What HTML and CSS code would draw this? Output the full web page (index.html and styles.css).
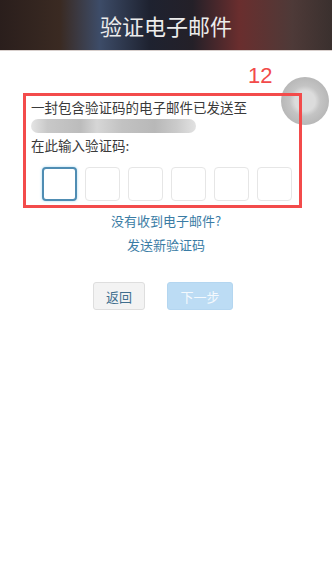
FILE: index.html
```html
<!DOCTYPE html>
<html lang="zh-CN">

<head>
    <meta charset="UTF-8">
    <meta name="viewport" content="width=device-width, initial-scale=1.0">
    <title>验证电子邮件</title>
    <link rel="stylesheet" href="styles.css">
</head>

<body>
    <header class="topbar">
        <h1>验证电子邮件</h1>
    </header>

    <main class="page">
        <span class="step-no">12</span>
        <span class="float-ball"></span>

        <section class="verify-box">
            <p class="line">一封包含验证码的电子邮件已发送至</p>
            <div class="email-mask"></div>
            <p class="line">在此输入验证码:</p>
            <div class="code-row">
                <input class="code active" maxlength="1">
                <input class="code" maxlength="1">
                <input class="code" maxlength="1">
                <input class="code" maxlength="1">
                <input class="code" maxlength="1">
                <input class="code" maxlength="1">
            </div>
        </section>

        <p class="link-text">没有收到电子邮件?</p>
        <p class="link-text resend">发送新验证码</p>

        <div class="actions">
            <button class="btn btn-back">返回</button>
            <button class="btn btn-next" disabled>下一步</button>
        </div>
    </main>
</body>

</html>
```

FILE: styles.css
```css
body {
    margin: 0;
    background: #fff;
    font-family: "Noto Sans CJK SC", "Noto Sans", sans-serif;
    color: #333;
}

.topbar {
    height: 50px;
    display: flex;
    align-items: center;
    justify-content: center;
    background: linear-gradient(90deg, #2a1e1c 0%, #3a2a22 18%, #3d4c68 30%, #1e2230 45%, #242028 58%, #6a2e2e 72%, #4e3a38 88%, #3a302e 100%);
    border-bottom: 1px solid #d8cfcc;
}

.topbar h1 {
    margin: 0;
    font-size: 22px;
    font-weight: 400;
    color: #ececec;
    line-height: 1;
}

.page {
    position: relative;
    padding-top: 42px;
}

.step-no {
    position: absolute;
    left: 248px;
    top: 12px;
    font-family: "Liberation Sans", sans-serif;
    font-size: 22px;
    color: #f24a4a;
}

.float-ball {
    position: absolute;
    left: 281px;
    top: 26px;
    width: 48px;
    height: 48px;
    border-radius: 50%;
    background: radial-gradient(circle at 50% 50%, #dcdcdc 0 30%, #c4c4c4 45%, #b8b8b8 70%, #c8c8c8 100%);
}

.verify-box {
    position: relative;
    margin-left: 23px;
    width: 268px;
    height: 108px;
    border: 3px solid #f34b4b;
    padding: 1px 0 0 5px;
    box-sizing: content-box;
}

.line {
    margin: 0;
    font-size: 13.5px;
    line-height: 20px;
    color: #3a3a3a;
}

.email-mask {
    width: 165px;
    height: 14px;
    margin: 2px 0 2px 0;
    border-radius: 7px;
    background: linear-gradient(90deg, #e4e4e4 0%, #c8c8c8 10%, #bcbcbc 30%, #d6d6d6 40%, #c2c2c2 55%, #b8b8b8 75%, #cacaca 88%, #e2e2e2 100%);
}

.code-row {
    display: flex;
    gap: 8px;
    margin: 12px 0 0 11px;
}

.code {
    width: 35px;
    height: 34px;
    box-sizing: border-box;
    border: 1px solid #e6e6e6;
    border-radius: 4px;
    background: #fff;
    padding: 0;
    outline: none;
}

.code.active {
    border: 2px solid #4f8db3;
    box-shadow: 0 0 3px #a8d8f0;
}

.link-text {
    margin: 5px 0 0;
    text-align: center;
    font-size: 13px;
    line-height: 16px;
    color: #3a7ca5;
}

.link-text.resend {
    margin-top: 8px;
}

.actions {
    display: flex;
    justify-content: center;
    gap: 22px;
    margin-top: 29px;
    padding-right: 6px;
}

.btn {
    height: 28px;
    border-radius: 3px;
    font-family: "Noto Sans CJK SC", sans-serif;
    font-size: 13px;
    padding: 0;
}

.btn-back {
    width: 52px;
    background: #f3f3f3;
    border: 1px solid #dedede;
    color: #3f6e8e;
}

.btn-next {
    width: 66px;
    background: #bcdcf4;
    border: 1px solid #b4d6f0;
    color: #f4f9fd;
}
```
